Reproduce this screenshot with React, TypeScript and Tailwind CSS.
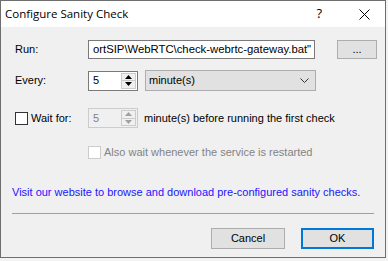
import React from "react";

const UI = { fontFamily: '"Liberation Sans", Arial, sans-serif' };

function Spin({ value, disabled }: { value: string; disabled?: boolean }) {
  const border = disabled ? "border-[#cccccc]" : "border-[#7a7a7a]";
  const tri = disabled ? "#a0a0a0" : "#000";
  return (
    <div className={`flex h-[20px] w-[50px] border ${border} ${disabled ? "bg-[#f0f0f0]" : "bg-white"}`}>
      <div className={`flex flex-1 items-center pl-[4px] text-[11px] ${disabled ? "text-[#838383]" : "text-black"}`}>{value}</div>
      <div className="my-[1px] mr-[1px] flex w-[15px] flex-col border border-[#cccccc] bg-[#f0f0f0]">
        <div className="flex flex-1 items-center justify-center border-b border-[#cccccc]">
          <svg width="7" height="4" viewBox="0 0 7 4"><path d="M0 4 L3.5 0 L7 4 Z" fill={tri} /></svg>
        </div>
        <div className="flex flex-1 items-center justify-center">
          <svg width="7" height="4" viewBox="0 0 7 4"><path d="M0 0 L3.5 4 L7 0 Z" fill={tri} /></svg>
        </div>
      </div>
    </div>
  );
}

function Check({ disabled }: { disabled?: boolean }) {
  return <div className={`h-[13px] w-[13px] shrink-0 border ${disabled ? "border-[#cccccc]" : "border-[#333333]"} bg-white`} />;
}

export default function App() {
  return (
    <div className="h-[261px] w-[388px] bg-[#f3f3f3]" style={UI}>
      <div className="flex h-[258px] w-[386px] flex-col border border-[#6e6e6e] bg-[#f0f0f0] text-[11px] text-black">
        <div className="flex h-[26px] shrink-0 items-center bg-white">
          <div className="pl-[4px] text-[11.5px] text-black" style={{ fontFamily: '"Open Sans", "Noto Sans", sans-serif' }}>
            Configure Sanity Check
          </div>
          <div className="ml-auto mr-[37px] text-[13px]" style={{ fontFamily: '"Open Sans", sans-serif' }}>?</div>
          <svg width="11" height="11" viewBox="0 0 11 11" className="mr-[15px]">
            <path d="M0.5 0.5 L10.5 10.5 M10.5 0.5 L0.5 10.5" stroke="#000" strokeWidth="1" />
          </svg>
        </div>

        <div className="flex flex-col pl-[14px]">
          <div className="mt-[13px] flex h-[19px] items-center">
            <div className="w-[73px]">Run:</div>
            <div className="flex h-[19px] w-[227px] items-center overflow-hidden whitespace-nowrap border border-[#7a7a7a] bg-white pl-[4px] text-[11.3px]">
              ortSIP\WebRTC\check-webrtc-gateway.bat"
            </div>
            <div className="ml-[22px] flex h-[19px] w-[40px] items-center justify-center border border-[#adadad] bg-[#e1e1e1] text-[11px]">
              ...
            </div>
          </div>

          <div className="mt-[11px] flex h-[21px] items-center">
            <div className="w-[73px]">Every:</div>
            <Spin value="5" />
            <div className="ml-[7px] flex h-[21px] w-[171px] items-center border border-[#adadad] bg-[#e1e1e1] pl-[3px] text-[11px]">
              minute(s)
              <svg width="9" height="5" viewBox="0 0 9 5" className="ml-auto mr-[6px]">
                <path d="M0.5 0.5 L4.5 4.5 L8.5 0.5" stroke="#333" strokeWidth="1" fill="none" />
              </svg>
            </div>
          </div>

          <div className="mt-[17px] flex h-[20px] items-center">
            <div className="flex w-[73px] items-center">
              <Check />
              <span className="ml-[3px]">Wait for:</span>
            </div>
            <Spin value="5" disabled />
            <div className="ml-[6px] whitespace-nowrap">minute(s) before running the first check</div>
          </div>

          <div className="mt-[17px] flex h-[14px] items-center pl-[73px]">
            <Check disabled />
            <span className="ml-[3px] whitespace-nowrap text-[#838383]">Also wait whenever the service is restarted</span>
          </div>
        </div>

        <div className="mt-[25px] whitespace-nowrap pl-[11px] text-[#2214ff]">
          Visit our website to browse and download pre-configured sanity checks.
        </div>
        <div className="mx-[11px] mt-[12px] h-[1px] bg-[#a0a0a0]" />
        <div className="mt-[14px] flex justify-end pr-[11px]">
          <div className="flex h-[21px] w-[74px] items-center justify-center border border-[#adadad] bg-[#e1e1e1]">Cancel</div>
          <div className="ml-[16px] flex h-[21px] w-[73px] items-center justify-center border-2 border-[#0078d7] bg-[#e1e1e1]">OK</div>
        </div>
      </div>
    </div>
  );
}
